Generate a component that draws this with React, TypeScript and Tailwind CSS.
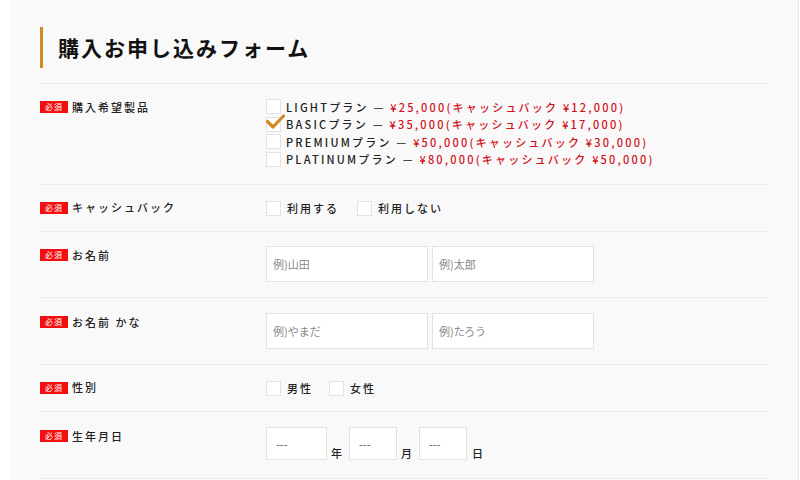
import React from 'react';

const font = { fontFamily: '"Noto Sans CJK JP", "Noto Sans", sans-serif' };

const plans = [
  { name: 'LIGHT', price: '¥25,000', back: '¥12,000', checked: false },
  { name: 'BASIC', price: '¥35,000', back: '¥17,000', checked: true },
  { name: 'PREMIUM', price: '¥50,000', back: '¥30,000', checked: false },
  { name: 'PLATINUM', price: '¥80,000', back: '¥50,000', checked: false },
];

const Box: React.FC<{ checked?: boolean }> = ({ checked }) => (
  <span className="relative inline-block w-[15px] h-[15px] shrink-0 bg-white border border-[#e3e3e3]">
    {checked && (
      <svg className="absolute left-[-1px] top-[-4px]" width="19" height="16" viewBox="0 0 19 16">
        <path d="M1.5 7.5 L7 13 L17.5 2" fill="none" stroke="#cf8a20" strokeWidth="3.2" strokeLinecap="round" strokeLinejoin="round" />
      </svg>
    )}
  </span>
);

const Badge = () => (
  <span className="inline-flex items-center justify-center w-[28px] h-[12px] bg-[#f30f0f] text-white text-[8px] leading-none tracking-[1px] mr-[4px]">
    必須
  </span>
);

const Row: React.FC<{ label: string; children: React.ReactNode; className?: string }> = ({ label, children, className }) => (
  <div className={`flex border-b border-[#ececec] ${className ?? ''}`}>
    <div className="w-[226px] shrink-0 flex items-center h-[20px] mt-[-1px]">
      <Badge />
      <span className="text-[11px] font-medium tracking-[2px] text-[#222]">{label}</span>
    </div>
    <div className="flex-1">{children}</div>
  </div>
);

const TextInput: React.FC<{ placeholder: string }> = ({ placeholder }) => (
  <input
    placeholder={placeholder}
    className="w-[162px] h-[36px] bg-white border border-[#e2e2e2] px-[6px] text-[11px] placeholder:text-[#888] outline-none"
    style={font}
  />
);

const DateInput: React.FC<{ w: string }> = ({ w }) => (
  <input
    placeholder="---"
    className={`${w} h-[33px] bg-white border border-[#e2e2e2] px-[9px] text-[11px] placeholder:text-[#555] outline-none`}
    style={font}
  />
);

const Opt: React.FC<{ label: string; mr: string }> = ({ label, mr }) => (
  <label className={`flex items-center gap-[6px] ${mr}`}>
    <Box />
    <span className="text-[11px] font-medium tracking-[2px] text-[#222]">{label}</span>
  </label>
);

export default function App() {
  return (
    <div className="w-[800px] h-[480px] overflow-hidden bg-white" style={font}>
      <div className="ml-[10px] w-[789px] h-full bg-[#f9f9f9] border-r border-[#e8e8e8] pl-[30px]">
        <div className="w-[730px]">
          <div className="pt-[27px] pb-[15px] border-b border-[#ececec]">
            <h1 className="h-[41px] border-l-[3px] border-[#d18c20] pl-[15px] flex items-center text-[21px] font-bold tracking-[2px] text-[#111]">
              購入お申し込みフォーム
            </h1>
          </div>

          <Row label="購入希望製品" className="pt-[14px] pb-[16px]">
            <div className="flex flex-col">
              {plans.map((p) => (
                <div key={p.name} className="flex items-center h-[17.5px] gap-[5px]">
                  <Box checked={p.checked} />
                  <span className="text-[11px] font-medium tracking-[2.2px] text-[#222] whitespace-nowrap">
                    {p.name}プラン —{' '}
                    <span className="text-[#d0101a]">
                      {p.price}(キャッシュバック {p.back})
                    </span>
                  </span>
                </div>
              ))}
            </div>
          </Row>

          <Row label="キャッシュバック" className="pt-[13px] pb-[13px] items-center">
            <div className="flex items-center h-[20px]">
              <Opt label="利用する" mr="mr-[18px]" />
              <Opt label="利用しない" mr="" />
            </div>
          </Row>

          <Row label="お名前" className="pt-[14px] pb-[15px]">
            <div className="flex gap-[4px]">
              <TextInput placeholder="例)山田" />
              <TextInput placeholder="例)太郎" />
            </div>
          </Row>

          <Row label="お名前 かな" className="pt-[15px] pb-[15px]">
            <div className="flex gap-[4px]">
              <TextInput placeholder="例)やまだ" />
              <TextInput placeholder="例)たろう" />
            </div>
          </Row>

          <Row label="性別" className="pt-[13px] pb-[13px] items-center">
            <div className="flex items-center h-[20px]">
              <Opt label="男性" mr="mr-[16px]" />
              <Opt label="女性" mr="" />
            </div>
          </Row>

          <Row label="生年月日" className="pt-[15px] pb-[18px]">
            <div className="flex items-end">
              <DateInput w="w-[61px]" />
              <span className="text-[11px] font-medium text-[#222] ml-[4px] mr-[7px] leading-none mb-[1px]">年</span>
              <DateInput w="w-[48px]" />
              <span className="text-[11px] font-medium text-[#222] ml-[4px] mr-[7px] leading-none mb-[1px]">月</span>
              <DateInput w="w-[48px]" />
              <span className="text-[11px] font-medium text-[#222] ml-[5px] leading-none mb-[1px]">日</span>
            </div>
          </Row>
        </div>
      </div>
    </div>
  );
}
